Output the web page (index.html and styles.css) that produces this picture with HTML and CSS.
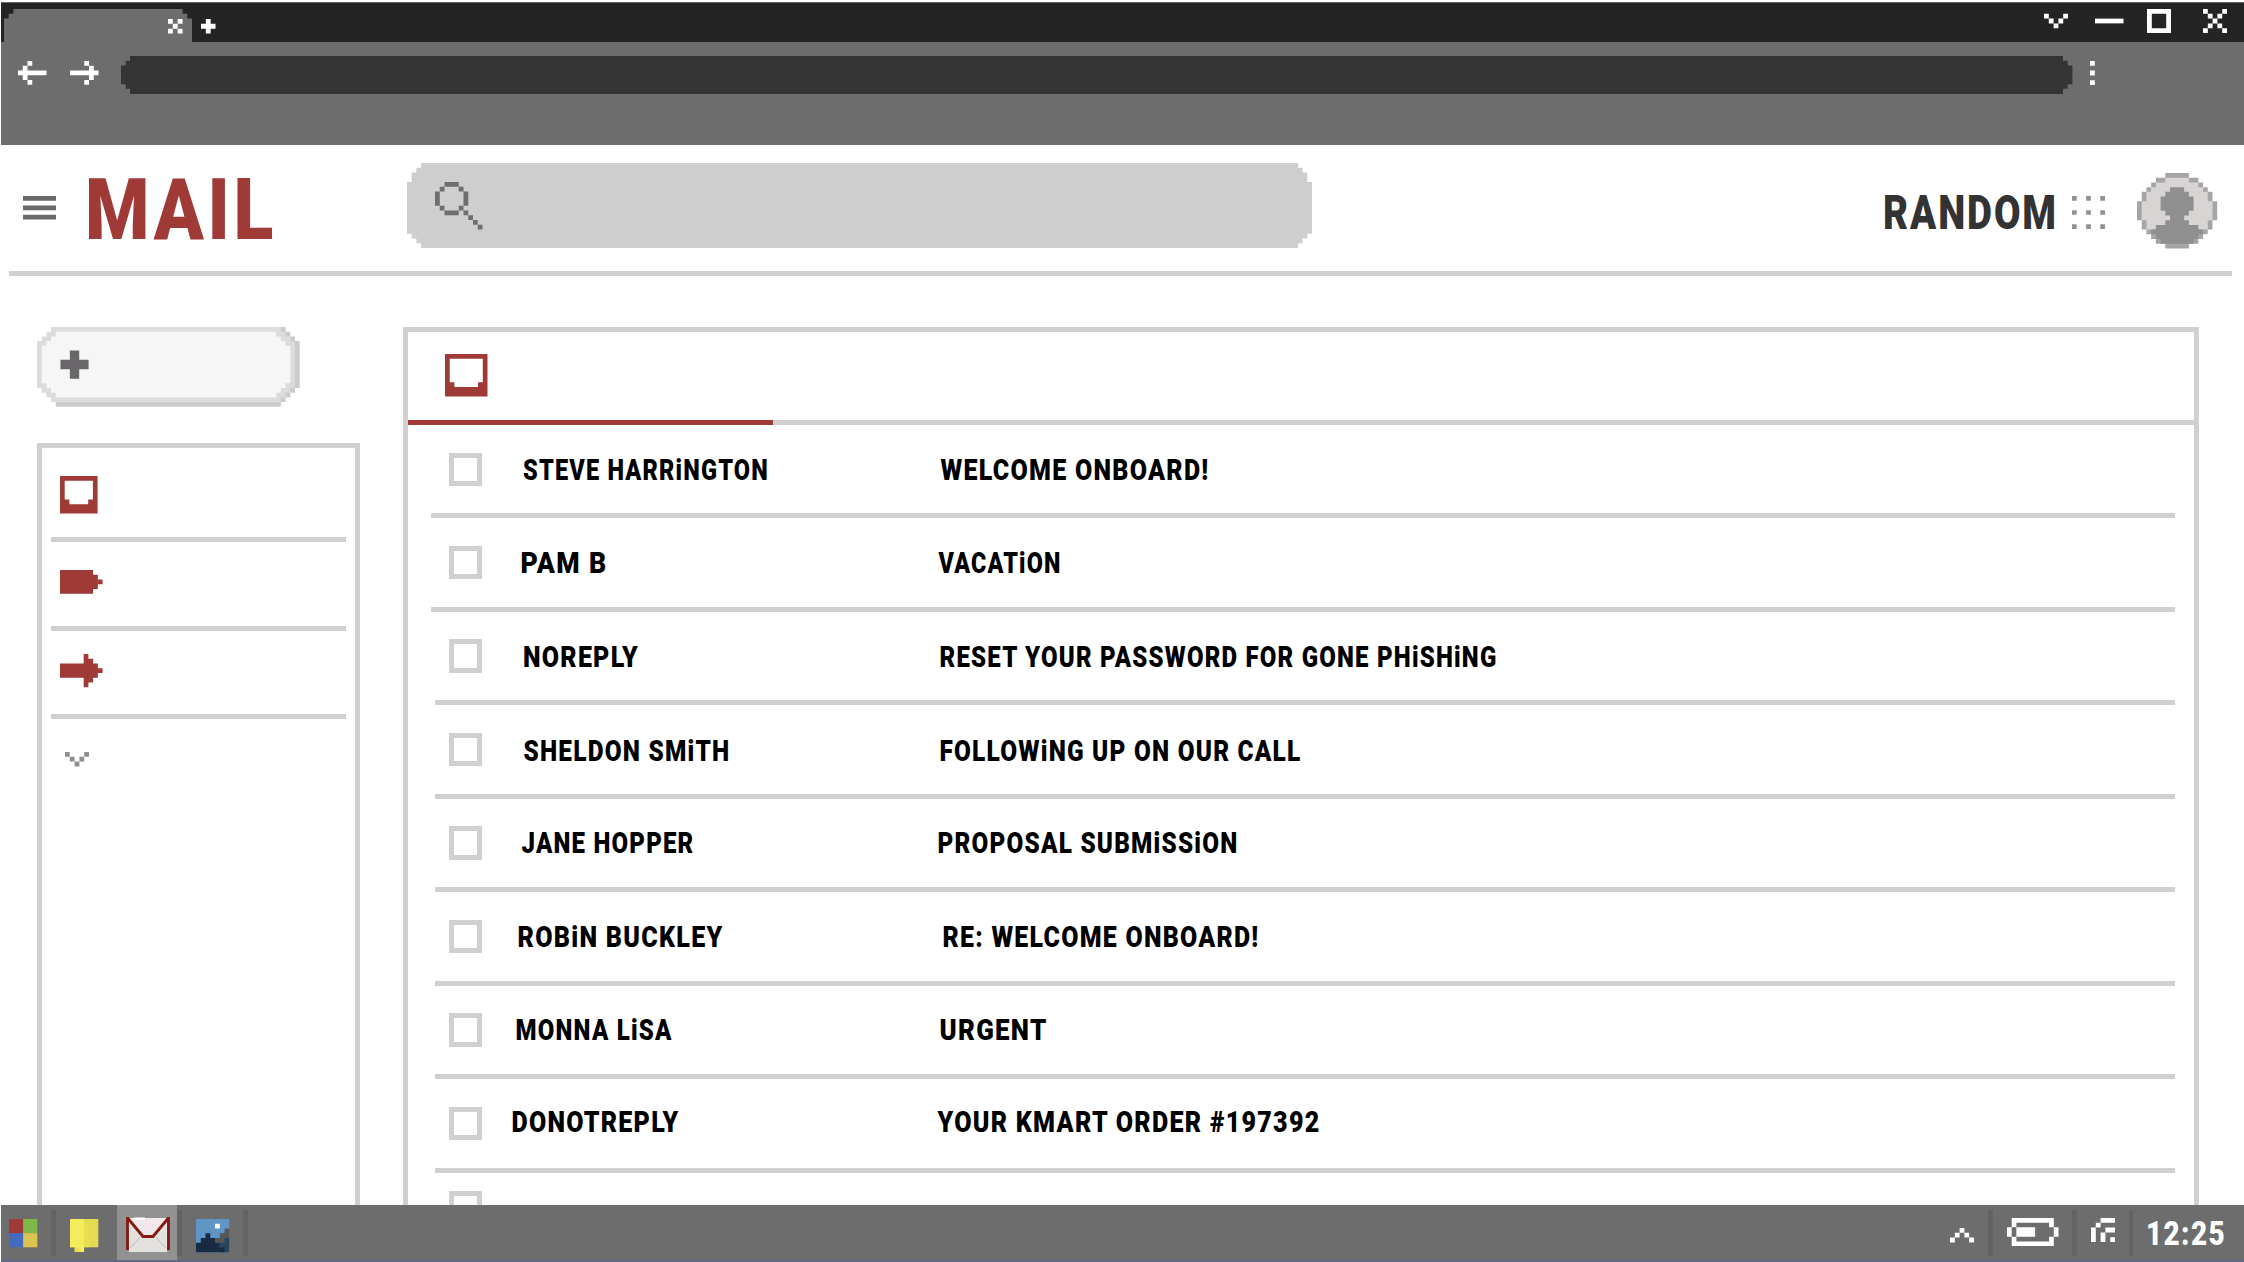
FILE: index.html
```html
<!DOCTYPE html>
<html lang="en">
<head>
<meta charset="utf-8">
<title>Mail</title>
<link rel="stylesheet" href="styles.css">
</head>
<body>
<div class="screen">
  <header class="titlebar">
    <svg class="tab" viewBox="0 0 40 7" preserveAspectRatio="none"><path d="M2 0H38V1H39V2H40V7H0V2H1V1H2Z"/></svg>
    <svg class="px tab-close" viewBox="0 0 3 3"><path d="M0 0h1v1h1V0h1v1H2v1h1v1H2V2H1v1H0V2h1V1H0Z"/></svg>
    <svg class="px tab-new" viewBox="0 0 3 3"><path d="M1 0h1v1h1v1H2v1H1V2H0V1h1Z"/></svg>
    <div class="window-controls">
      <svg class="px expand-icon" viewBox="0 -1 5 5"><path d="M0 0h1v1h1v1h1V1h1V0h1v1H4v1H3v1H2V2H1V1H0Z"/></svg>
      <svg class="px minimize" viewBox="0 0 6 5"><path d="M0 2h6v1H0Z"/></svg>
      <svg class="px maximize" viewBox="0 0 5 5"><path fill-rule="evenodd" d="M0 0h5v5H0ZM1 1v3h3V1Z"/></svg>
      <svg class="px close" viewBox="0 0 5 5"><path d="M0 0h1v1h1v1h1V1h1V0h1v1H4v1H3v1h1v1h1v1H4V4H3V3H2v1H1v1H0V4h1V3h1V2H1V1H0Z"/></svg>
    </div>
  </header>
  <nav class="toolbar">
    <svg class="px arrow" viewBox="0 0 6 5"><path d="M2 0h1v1H2v1h4v1H2v1h1v1H2V4H1V3H0V2h1V1h1Z"/></svg>
    <svg class="px arrow forward" viewBox="0 0 6 5"><path d="M3 0h1v1h1v1h1v1H5v1H4v1H3V4h1V3H0V2h4V1H3Z"/></svg>
    <div class="address">
      <svg class="cap" viewBox="0 0 2 8" preserveAspectRatio="none"><path d="M2 0V8H2V7H1V6H0V2H1V1H2Z"/></svg>
      <div class="address-body"></div>
      <svg class="cap" viewBox="0 0 2 8" preserveAspectRatio="none"><path d="M0 0V8H0V7H1V6H2V2H1V1H0Z"/></svg>
    </div>
    <svg class="px more" viewBox="0 0 1 5"><path d="M0 0h1v1H0ZM0 2h1v1H0ZM0 4h1v1H0Z"/></svg>
  </nav>

  <div class="app-header">
    <svg class="menu" viewBox="0 0 7 5"><path d="M0 0h7v1H0ZM0 2h7v1H0ZM0 4h7v1H0Z"/></svg>
    <svg class="brand" width="186" height="61"><text x="-3" y="60.500" textLength="192" lengthAdjust="spacingAndGlyphs">MAIL</text></svg>
    <div class="search">
      <svg class="search-bg" viewBox="0 0 193 18" preserveAspectRatio="none"><path d="M3 0H190V1H191V2H192V4H193V15H192V16H191V17H190V18H3V17H2V16H1V15H0V4H1V2H2V1H3Z"/></svg>
      <svg class="search-icon" viewBox="0 0 10 10"><path d="M2 0h3v1H2ZM1 1h1v1H1ZM5 1h1v1H5ZM0 2h1v3H0ZM6 2h1v3H6ZM1 5h1v1H1ZM5 5h1v1H5ZM2 6h3v1H2ZM6 6h1v1H6ZM7 7h1v1H7ZM8 8h1v1H8ZM9 9h1v1H9Z"/></svg>
    </div>
    <svg class="account" width="169" height="34"><text x="-2" y="33.2" textLength="175" lengthAdjust="spacingAndGlyphs">RANDOM</text></svg>
    <svg class="apps" viewBox="0 0 7 7"><path d="M0 0h1v1H0ZM3 0h1v1H3ZM6 0h1v1H6ZM0 3h1v1H0ZM3 3h1v1H3ZM6 3h1v1H6ZM0 6h1v1H0ZM3 6h1v1H3ZM6 6h1v1H6Z"/></svg>
    <svg class="avatar" viewBox="0 0 17 16">
      <path fill="#a5a5a5" d="M6 0h5v1h2v1h1v1h1v1h1v2h1v4h-1v2h-1v1h-1v1h-1v1h-2v1H6v-1H4v-1H3v-1H2v-1H1v-2H0V6h1V4h1V3h1V2h1V1h2Z"/>
      <path fill="#d8d4d4" d="M6 1h5v1h2v1h1v1h1v2h1v4h-1v2H2v-2H1V6h1V4h1V3h1V2h2Z"/>
      <path fill="#8f8f8f" d="M7 3h3v1h1v1h1v3h-1v1h-1v1h1v1h2v1h1v1h-1v1h-1v1H5v-1H4v-1H3v-1h1v-1h2v-1h1V9H6V8H5V5h1V4h1Z"/>
    </svg>
  </div>

  <main class="workspace">
    <aside class="sidebar">
      <div class="compose">
        <svg viewBox="0 0 56 17" preserveAspectRatio="none">
          <path fill="#cdcacd" d="M4 0H53V1H54V2H55V3H56V13H55V14H54V15H53V16H52V17H4Z"/>
          <path fill="#dddbde" d="M3 0H52V1H53V2H54V3H55V13H54V14H53V15H52V16H3V15H2V14H1V13H0V3H1V2H2V1H3Z"/>
          <path fill="#f6f6f6" d="M4 1H51V2H52V3H53V4H54V12H53V13H52V14H51V15H4V14H3V13H2V12H1V4H2V3H3V2H4Z"/>
          <path fill="#6a676a" d="M7 5h2v2h2v2H9v2H7V9H5V7h2Z"/>
        </svg>
      </div>
      <div class="folders">
        <div class="folder first"><svg class="inbox" viewBox="0 0 8 8"><path fill-rule="evenodd" d="M0 0h8v8H0ZM1 1v4h1v1h4V5h1V1Z"/></svg></div>
        <div class="folder"><svg class="tag" viewBox="0 0 9 5"><path d="M0 0h7v1h1v1h1v1H8v1H7v1H0Z"/></svg></div>
        <div class="folder"><svg class="tag" viewBox="0 0 9 7"><path d="M5 0h1v1h1v1h1v1h1v1H8v1H7v1H6v1H5V5H0V2h5Z"/></svg></div>
        <div class="folder expand"><svg class="expand-icon" viewBox="0 0 5 3"><path d="M0 0h1v1h1v1h1V1h1V0h1v1H4v1H3v1H2V2H1V1H0Z"/></svg></div>
      </div>
    </aside>
    <section class="mailbox">
      <div class="tabs">
        <div class="tab-active"><svg viewBox="0 0 9 9"><path fill-rule="evenodd" d="M0 0h9v9H0ZM1 1v5h1v1h5V6h1V1Z"/></svg></div>
      </div>
      <div class="mail wide"><span class="check"></span><svg class="label"><text x="13" y="55" textLength="246" lengthAdjust="spacingAndGlyphs">STEVE HARRiNGTON</text><text x="430.500" y="55" textLength="269" lengthAdjust="spacingAndGlyphs">WELCOME ONBOARD!</text></svg></div>
      <div class="mail wide"><span class="check"></span><svg class="label"><text x="10.500" y="54.6" textLength="87" lengthAdjust="spacingAndGlyphs">PAM B</text><text x="428.500" y="54.6" textLength="123" lengthAdjust="spacingAndGlyphs">VACATiON</text></svg></div>
      <div class="mail"><span class="check"></span><svg class="label"><text x="13" y="55.4" textLength="116" lengthAdjust="spacingAndGlyphs">NOREPLY</text><text x="429.500" y="55.4" textLength="558" lengthAdjust="spacingAndGlyphs">RESET YOUR PASSWORD FOR GONE PHiSHiNG</text></svg></div>
      <div class="mail"><span class="check"></span><svg class="label"><text x="13.500" y="56.3" textLength="207" lengthAdjust="spacingAndGlyphs">SHELDON SMiTH</text><text x="429.500" y="56.3" textLength="362" lengthAdjust="spacingAndGlyphs">FOLLOWiNG UP ON OUR CALL</text></svg></div>
      <div class="mail"><span class="check"></span><svg class="label"><text x="11.500" y="53.7" textLength="173" lengthAdjust="spacingAndGlyphs">JANE HOPPER</text><text x="427.500" y="53.7" textLength="301" lengthAdjust="spacingAndGlyphs">PROPOSAL SUBMiSSiON</text></svg></div>
      <div class="mail"><span class="check"></span><svg class="label"><text x="7.500" y="55.1" textLength="206" lengthAdjust="spacingAndGlyphs">ROBiN BUCKLEY</text><text x="432.500" y="55.1" textLength="317" lengthAdjust="spacingAndGlyphs">RE: WELCOME ONBOARD!</text></svg></div>
      <div class="mail"><span class="check"></span><svg class="label"><text x="5.500" y="53.8" textLength="157" lengthAdjust="spacingAndGlyphs">MONNA LiSA</text><text x="429.500" y="53.8" textLength="108" lengthAdjust="spacingAndGlyphs">URGENT</text></svg></div>
      <div class="mail"><span class="check"></span><svg class="label"><text x="1.500" y="53.3" textLength="168" lengthAdjust="spacingAndGlyphs">DONOTREPLY</text><text x="427.500" y="53.3" textLength="383" lengthAdjust="spacingAndGlyphs">YOUR KMART ORDER #197392</text></svg></div>
      <div class="mail partial"><span class="check"></span></div>
    </section>
  </main>

  <footer class="taskbar">
    <div class="task start"><svg viewBox="0 0 6 6"><path fill="#9f3a37" d="M0 0h3v3H0Z"/><path fill="#7fb84a" d="M3 0h3v3H3Z"/><path fill="#446bbd" d="M0 3h3v3H0Z"/><path fill="#d9c54f" d="M3 3h3v3H3Z"/></svg></div>
    <div class="divider"></div>
    <div class="task notes"><svg viewBox="0 0 6 7"><path fill="#e4db53" d="M0 0h6v6H0Z"/><path fill="#f4ec5c" d="M0 0h3v7H1V6H0Z"/><path fill="#e9df50" d="M1 6h1v1H1ZM3 1h1v5H3Z"/></svg></div>
    <div class="task mail-app"><svg viewBox="0 0 44 35">
      <path fill="#e3e1e0" d="M2.5 1H41V35H3V33H2.5Z"/>
      <path fill="#f1e8eb" d="M3 1H41L27 19H17Z"/><path fill="#fff" d="M8 .5H19V2.500H8Z"/>
      <path fill="none" stroke="#bdbdbd" stroke-width="1" d="M14 20L4 31M30 20L40 31"/>
      <path fill="none" stroke="#86180f" stroke-width="2.800" d="M1.500 0V33M42.500 0V33M2 1.500L17 19.500H27L42 1.500"/>
    </svg></div>
    <div class="divider"></div>
    <div class="task photos"><svg viewBox="0 0 7 7"><path fill="#5f96c6" d="M0 0h7v7H0Z"/><path fill="#fff" d="M4 1h1v1H4Z"/><path fill="#28455f" d="M5 4h2v3H5Z"/><path fill="#565656" d="M6 2h1v2H6v1H4V4h1V3h1Z"/><path fill="#182b43" d="M2 3h1v1h1v1h1v1h1v1H0V5h1V4h1Z"/></svg></div>
    <div class="divider"></div>
    <div class="tray">
      <svg class="px caret" viewBox="0 0 5 3"><path d="M2 0h1v1h1v1h1v1H4V2H3V1H2v1H1v1H0V2h1V1h1Z"/></svg>
      <div class="divider"></div>
      <svg class="px battery" viewBox="0 0 11 6"><path d="M1 0h9v1H1ZM1 1h1v1H1ZM9 1h1v1H9ZM0 2h1v2H0ZM10 2h1v2h-1ZM2 2h4v2H2ZM1 4h1v1H1ZM9 4h1v1H9ZM1 5h9v1H1Z"/></svg>
      <div class="divider"></div>
      <svg class="px wifi" viewBox="0 0 5 5"><path d="M2 0h3v1H2ZM1 1h1v1H1ZM0 2h1v3H0ZM3 2h2v1H3ZM2 3h1v2H2ZM4 4h1v1H4Z"/></svg>
      <div class="divider"></div>
      <svg class="px clock" width="77" height="25"><text x="-1" y="24.500" textLength="80" lengthAdjust="spacingAndGlyphs">12:25</text></svg>
    </div>
  </footer>
</div>
</body>
</html>
```
FILE: styles.css
```css
* { box-sizing: border-box; }
body { margin: 0; background: #fff; overflow: hidden; }
svg { display: block; flex: none; overflow: visible; }
text { font-family: Roboto, "Liberation Sans", sans-serif; font-weight: 900; letter-spacing: .05em; }
.px { fill: #fff; }
.expand-icon { width: 24px; }

.screen {
  width: 2244px; height: 1262px; padding: 2px 0 0 1px;
  display: flex; flex-direction: column; overflow: hidden;
}

/* Browser chrome */
.titlebar {
  height: 40px; flex: none; background: #242424; border-top: 1px solid #666;
  display: flex; align-items: flex-start; padding-left: 3px;
}
.tab { width: 188px; height: 33px; margin-top: 6.300px; fill: #6d6d6d; }
.tab-close { width: 14.500px; margin: 15.500px 0 0 -24.500px; }
.tab-new { width: 14.500px; margin: 15.500px 0 0 18.500px; }
.window-controls { display: flex; margin: 6.300px 17px 0 auto; }
.minimize { width: 28.500px; margin-left: 27.500px; }
.maximize { width: 24px; margin-left: 23px; }
.close { width: 24px; margin-left: 32.500px; }

.toolbar {
  height: 102.500px; flex: none; background: #6d6d6d;
  display: flex; align-items: flex-start; padding: 14px 0 0 17px;
}
.arrow { width: 28.500px; margin-top: 4.500px; }
.forward { margin-left: 23.300px; }
.address { display: flex; width: 1950.500px; height: 37.500px; margin-left: 23.200px; }
.cap { width: 9.400px; height: 37.500px; fill: #343434; }
.address-body { flex: 1; background: #343434; margin: 0 -.4px; }
.more { width: 4.800px; margin: 4.500px 0 0 18.500px; }

/* Application header */
.app-header {
  height: 131px; flex: none; margin: 0 12px 0 8px; border-bottom: 5px solid #d0d0d0;
  display: flex; align-items: flex-start;
}
.menu { width: 33px; margin: 51px 0 0 14px; fill: #6a6a6a; }
.brand { margin: 33px 0 0 32.300px; fill: #9f3a37; }
.brand text { font-size: 86px; }
.search { width: 905px; height: 85px; margin: 18px 0 0 133px; display: grid; }
.search > * { grid-area: 1 / 1; }
.search-bg { width: 905px; height: 85px; fill: #cecece; }
.search-icon { width: 47.500px; margin: 19px 0 0 27.500px; fill: #6e6e6e; }
.account { margin: 51.500px 0 0 auto; fill: #333; }
.account text { font-size: 47.300px; }
.apps { width: 33px; margin: 51.500px 0 0 18.500px; fill: #929292; }
.avatar { width: 80.200px; margin: 28px 14.500px 0 32.300px; }

/* Content */
.workspace { flex: 1; min-height: 0; overflow: hidden; display: flex; padding: 51px 45px 0 36px; }
.sidebar { width: 323.300px; flex: none; }
.compose, .compose svg { width: 262.700px; height: 79.800px; }
.folders { height: 1000px; margin-top: 37px; border: 5px solid #d0d0d0; padding: 0 9px; fill: #9f3a37; }
.folder { height: 88.700px; border-bottom: 5px solid #d0d0d0; display: flex; align-items: center; padding-left: 9px; }
.folder.first { height: 93.700px; padding-top: 4px; }
.folder:nth-child(2), .folder:nth-child(3) { padding-bottom: 4px; }
.folder.expand { border: 0; padding: 0 0 10px 13.700px; fill: #8f8f8f; }
.inbox { width: 37.600px; }
.tag { width: 42.600px; }

.mailbox { flex: 1; height: 1200px; margin-left: 42.400px; border: 5px solid #d0d0d0; }
.tabs { height: 93.500px; border-bottom: 5px solid #d0d0d0; }
.tab-active { width: 365.500px; height: 93.500px; padding: 22.500px 0 0 37px; border-bottom: 5px solid #9f3a37; }
.tab-active svg { width: 42.500px; fill: #9f3a37; }
.mail {
  height: 93.440px; margin: 0 19px 0 27.600px; padding-left: 13.900px;
  border-bottom: 5px solid #d0d0d0; display: flex;
}
.mail.wide { margin-left: 23.100px; padding-left: 18.400px; }
.check { width: 33.300px; height: 33.300px; margin-top: 27.600px; border: 5px solid #d0d0d0; flex: none; }
.label { width: 1200px; height: 88px; margin-left: 27.500px; }
.label text { font-size: 30px; fill: #000; }
.partial .check { margin-top: 18px; }

/* Taskbar */
.taskbar {
  height: 57.500px; flex: none; background: #6d6d6d; border-bottom: 2px solid #5d6b86;
  display: flex; align-items: flex-start;
}
.divider { width: 4.500px; height: 46px; margin-top: 5.500px; background: #646264; flex: none; }
.task { height: 55.500px; padding-top: 14.500px; flex: none; }
.start { width: 50.300px; padding-left: 7.700px; }
.start svg { width: 28.300px; }
.notes { width: 61px; padding-left: 14px; }
.notes svg { width: 28.300px; }
.mail-app { width: 60.500px; padding: 12.500px 0 0 9px; background: #929292; }
.mail-app svg { width: 44px; }
.photos { width: 61.500px; padding-left: 14.500px; }
.photos svg { width: 33.300px; }
.tray { height: 55.500px; margin-left: auto; margin-right: 20px; display: flex; align-items: center; }
.tray .divider { margin: 1px 14px 0; }
.caret { width: 24px; margin-top: 6px; }
.battery { width: 51.500px; }
.wifi { width: 24px; margin-bottom: 4px; }
.clock text { font-size: 34px; }
```
